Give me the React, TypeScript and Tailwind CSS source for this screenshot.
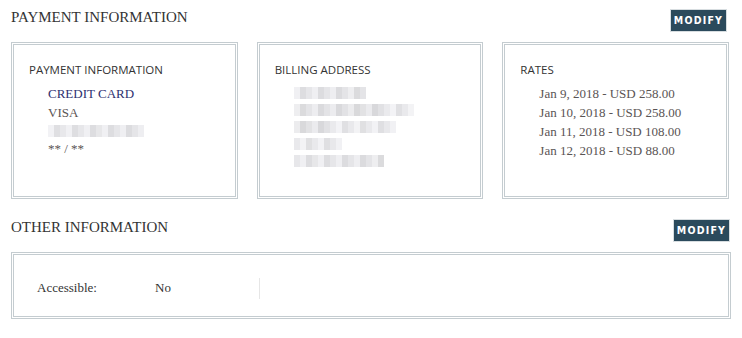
import React from 'react';

const serif = { fontFamily: '"Liberation Serif", "Times New Roman", serif' };

// pixelated placeholder for the blurred-out personal data
const Blurred: React.FC<{ cells: string[] }> = ({ cells }) => (
  <div className="flex h-[12px] items-stretch opacity-70">
    {cells.map((c, i) => (
      <div key={i} className="w-[6px]" style={{ background: c }} />
    ))}
  </div>
);

const shade = (seed: number, n: number) =>
  Array.from({ length: n }, (_, i) => {
    const v = 200 + ((seed * 37 + i * 53) % 40);
    return `rgb(${v},${v},${v + 4})`;
  });

const ModifyButton = () => (
  <button className="h-[23px] w-[57px] border border-[#d7dde0] bg-[#2b4a5c] font-['DejaVu_Sans_Condensed','Liberation_Sans_Narrow',sans-serif] text-[10.5px] font-bold tracking-[1.2px] text-white">
    MODIFY
  </button>
);

const Card: React.FC<{ title: string; children: React.ReactNode }> = ({ title, children }) => (
  <div className="h-[157px] border-[3px] border-double border-[#c4ccd0] px-[15px] pt-[16px]">
    <h3 className="font-['Open_Sans',sans-serif] text-[11.5px] text-[#333]">{title}</h3>
    <div className="mt-[9px] flex flex-col gap-[5px] pl-[19px] text-[13px] leading-[14px] text-[#5a5454]" style={serif}>
      {children}
    </div>
  </div>
);

export default function App() {
  return (
    <div className="w-[742px] bg-white pl-[11px] pr-[11px] pt-[9px]">
      <div className="flex items-start justify-between pr-[4px]">
        <h2 className="text-[15px] leading-[16px] text-[#333]" style={serif}>PAYMENT INFORMATION</h2>
        <ModifyButton />
      </div>

      <div className="mt-[10px] grid grid-cols-3 gap-[19px] pr-[2px]">
        <Card title="PAYMENT INFORMATION">
          <span className="text-[#2d3170]">CREDIT CARD</span>
          <span>VISA</span>
          <Blurred cells={shade(1, 16)} />
          <span>** / **</span>
        </Card>
        <Card title="BILLING ADDRESS">
          <Blurred cells={shade(2, 12)} />
          <Blurred cells={shade(3, 20)} />
          <Blurred cells={shade(4, 17)} />
          <Blurred cells={shade(5, 8)} />
          <Blurred cells={shade(6, 15)} />
        </Card>
        <Card title="RATES">
          <span>Jan 9, 2018 - USD 258.00</span>
          <span>Jan 10, 2018 - USD 258.00</span>
          <span>Jan 11, 2018 - USD 108.00</span>
          <span>Jan 12, 2018 - USD 88.00</span>
        </Card>
      </div>

      <div className="mt-[20px] flex items-start justify-between pr-[1px]">
        <h2 className="text-[15px] leading-[16px] text-[#333]" style={serif}>OTHER INFORMATION</h2>
        <ModifyButton />
      </div>

      <div className="mt-[10px] flex h-[67px] items-center border-[3px] border-double border-[#c4ccd0] pl-[23px] pt-[5px]" style={serif}>
        <span className="w-[118px] text-[13px] text-[#333]">Accessible:</span>
        <span className="w-[104px] text-[13px] text-[#333]">No</span>
        <div className="h-[21px] w-px bg-[#e6e6e6]" />
      </div>
    </div>
  );
}
